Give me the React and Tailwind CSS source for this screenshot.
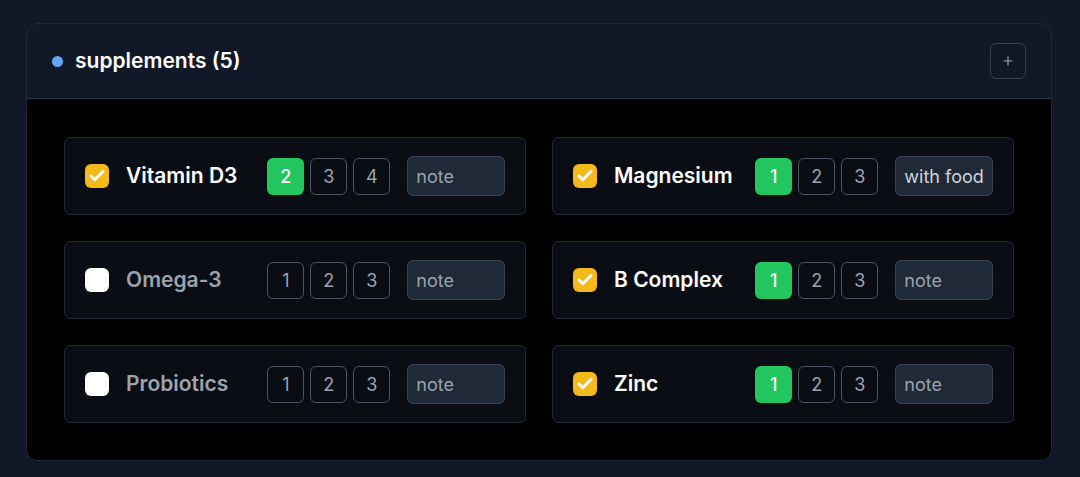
import { Check, Plus } from 'lucide-react';

const items = [
  { name: 'Vitamin D3', done: true, doses: [2, 3, 4], active: 2, note: '' },
  { name: 'Magnesium', done: true, doses: [1, 2, 3], active: 1, note: 'with food' },
  { name: 'Omega-3', done: false, doses: [1, 2, 3], active: null, note: '' },
  { name: 'B Complex', done: true, doses: [1, 2, 3], active: 1, note: '' },
  { name: 'Probiotics', done: false, doses: [1, 2, 3], active: null, note: '' },
  { name: 'Zinc', done: true, doses: [1, 2, 3], active: 1, note: '' },
];

const Row = ({ item }) => (
  <div className="flex items-center h-[78px] px-5 bg-[#0a0d14] border border-[#1f2736] rounded-md">
    <div
      className={
        'w-6 h-6 rounded-md flex items-center justify-center shrink-0 ' +
        (item.done ? 'bg-[#f4b91a]' : 'bg-white')
      }
    >
      {item.done && <Check className="w-[18px] h-[18px] text-white" strokeWidth={4} />}
    </div>
    <span
      className={
        'ml-[17px] w-[142px] text-[21px] font-semibold ' +
        (item.done ? 'text-white' : 'text-[#9ca3af]')
      }
    >
      {item.name}
    </span>
    <div className="flex gap-1.5">
      {item.doses.map((d) => (
        <div
          key={d}
          className={
            'w-[37px] h-[37px] rounded-md flex items-center justify-center text-[18px] ' +
            (d === item.active
              ? 'bg-[#22c55e] text-white font-medium'
              : 'border border-[#4b5563] text-[#9ca3af]')
          }
        >
          {d}
        </div>
      ))}
    </div>
    <div
      className={
        'ml-[17px] w-[98px] h-10 rounded-md bg-[#1f2937] border border-[#374151] flex items-center px-2 text-[18px] ' +
        (item.note ? 'text-[#d1d5db]' : 'text-[#9ca3af]')
      }
    >
      {item.note || 'note'}
    </div>
  </div>
);

export default function App() {
  return (
    <div className="min-h-screen bg-[#111827] pt-[23px] px-[26px] font-['Inter','Liberation_Sans',sans-serif]">
      <div className="w-[1026px] rounded-xl border border-[#1f2937] overflow-hidden">
        <div className="h-[75px] flex items-center justify-between pl-[25px] pr-[25px] border-b border-[#273244]">
          <div className="flex items-center gap-3">
            <span className="w-[11px] h-[11px] rounded-full bg-[#60a5fa]" />
            <span className="text-[21px] font-semibold text-white">supplements (5)</span>
          </div>
          <button className="w-9 h-9 rounded-md border border-[#374151] flex items-center justify-center text-[#9ca3af]">
            <Plus className="w-[14px] h-[14px]" strokeWidth={2} />
          </button>
        </div>
        <div className="bg-black px-[37px] pt-[38px] pb-[37px] grid grid-cols-2 gap-x-[26px] gap-y-[26px]">
          {items.map((item) => (
            <Row key={item.name} item={item} />
          ))}
        </div>
      </div>
    </div>
  );
}
